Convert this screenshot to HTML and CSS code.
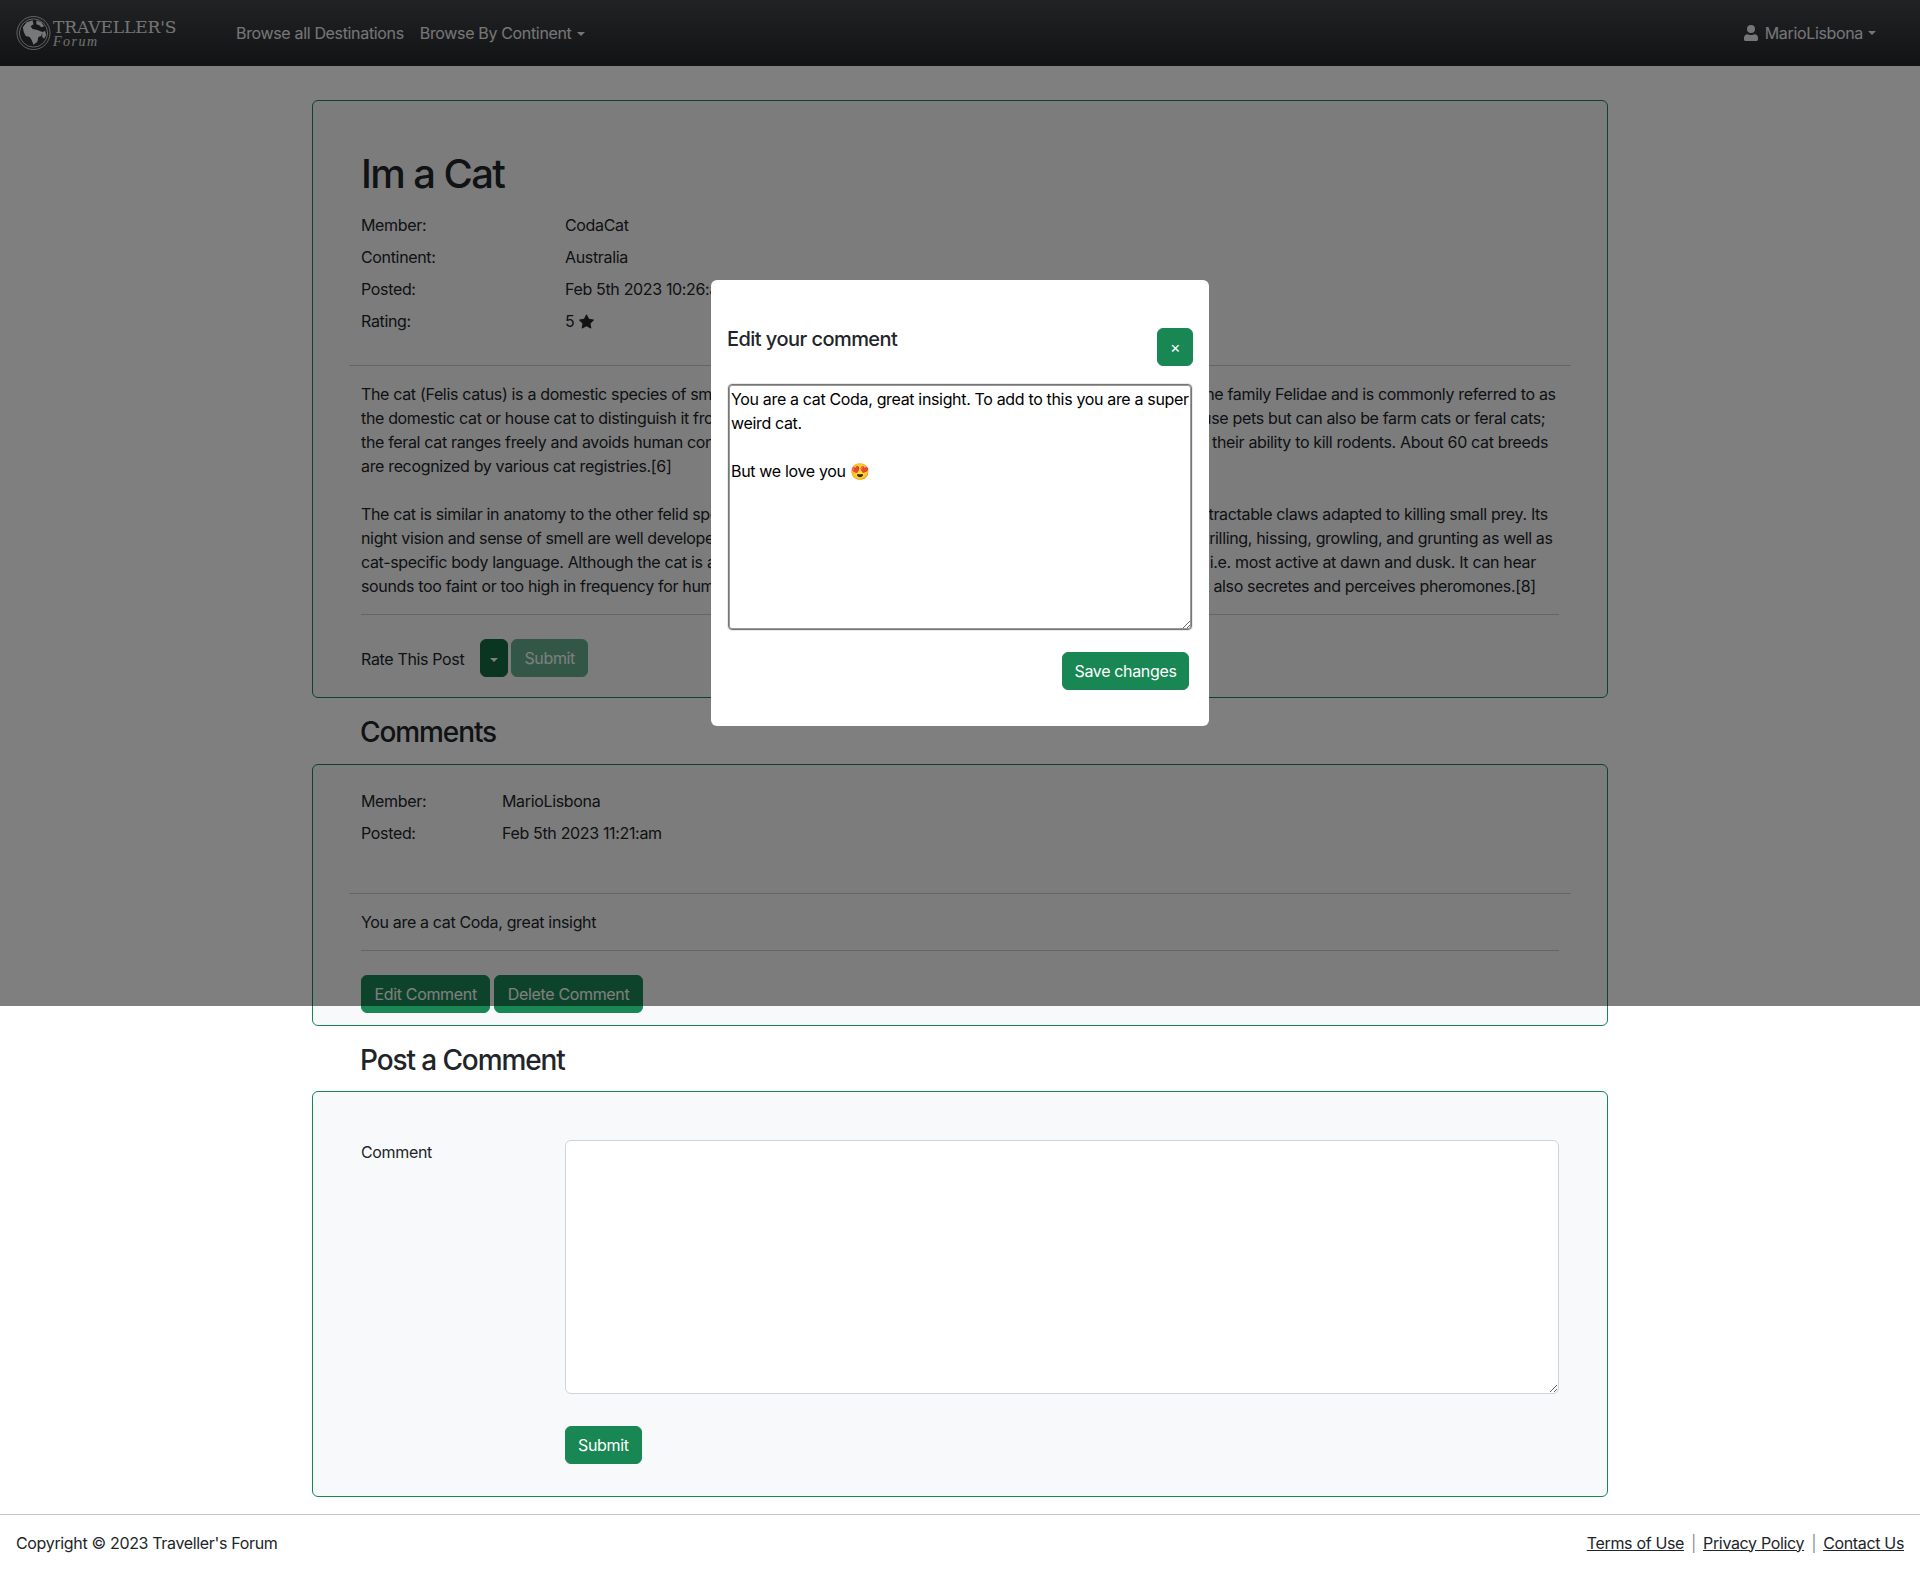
FILE: index.html
```html
<!DOCTYPE html>
<html lang="en">
  <head>
    <meta charset="UTF-8" />
    <title>Traveller's Forum</title>
    <link rel="stylesheet" href="styles.css">
  </head>
  <body>
    <nav class="navbar">
      <a class="brand">
        <svg class="globe" width="35" height="36" viewBox="0 0 36 36">
          <circle cx="18" cy="18" r="17" fill="none" stroke="#f0f0f0" stroke-width="0.8"/>
          <circle cx="18" cy="18" r="14.500" fill="#2e3033" stroke="#f0f0f0" stroke-width="0.8"/>
          <path d="M7 12l4-5 6-2 1 4-3 2 2 3 5 1 5 2-1 4-3 1-1 5-4 3-2-5-2-3-4-1-2-4zM21 5l5 2 3 4-3 1-2-2-3-1zM27 17l3-1 1 4-2 4-2-2z" fill="#f0f0f0"/>
        </svg>
        <span class="brand-text">
          <span class="brand-name">TRAVELLER'S</span>
          <span class="brand-sub">Forum</span>
        </span>
      </a>
      <a class="nav-link">Browse all Destinations</a>
      <a class="nav-link caret">Browse By Continent</a>
      <a class="nav-link caret user">
        <svg width="14" height="16" viewBox="0 0 14 16" fill="#ececec">
          <path d="M7 8a4 4 0 1 0 0-8 4 4 0 0 0 0 8zM3.500 9.200C1.500 9.200 0 10.800 0 12.800V14.500C0 15.300.7 16 1.500 16h11c.8 0 1.500-.7 1.500-1.500v-1.700c0-2-1.500-3.600-3.500-3.600-1 0-1.700.8-3.500.8s-2.500-.8-3.500-.8z"/>
        </svg>
        MarioLisbona
      </a>
    </nav>

    <main class="container">
      <section class="card post-card">
        <h1>Im a Cat</h1>
        <dl class="meta post-meta">
          <dt>Member:</dt><dd>CodaCat</dd>
          <dt>Continent:</dt><dd>Australia</dd>
          <dt>Posted:</dt><dd>Feb 5th 2023 10:26:am</dd>
          <dt>Rating:</dt>
          <dd class="rating">5
            <svg width="15" height="15" viewBox="0 0 16 16" fill="#212529">
              <path d="M3.612 15.443c-.386.198-.824-.149-.746-.592l.83-4.73L.173 6.765c-.329-.314-.158-.888.283-.95l4.898-.696L7.538.792c.197-.39.73-.39.927 0l2.184 4.327 4.898.696c.441.062.612.636.282.95l-3.522 3.356.83 4.73c.078.443-.36.79-.746.592L8 13.187l-4.389 2.256z"/>
            </svg>
          </dd>
        </dl>
        <hr class="wide">
        <p class="body-text">The cat (Felis catus) is a domestic species of small carnivorous mammal.[1][2] It is the only domesticated species in the family Felidae and is commonly referred to as the domestic cat or house cat to distinguish it from the wild members of the family.[4] Cats are commonly kept as house pets but can also be farm cats or feral cats; the feral cat ranges freely and avoids human contact.[5] Domestic cats are valued by humans for companionship and their ability to kill rodents. About 60 cat breeds are recognized by various cat registries.[6]</p>
        <p class="body-text">The cat is similar in anatomy to the other felid species: it has a strong flexible body, quick reflexes, sharp teeth, and retractable claws adapted to killing small prey. Its night vision and sense of smell are well developed. Cat communication includes vocalizations like meowing, purring, trilling, hissing, growling, and grunting as well as cat-specific body language. Although the cat is a social species, but it is a solitary hunter and a crepuscular predator, i.e. most active at dawn and dusk. It can hear sounds too faint or too high in frequency for human ears, such as those made by mice and other small mammals.[7] It also secretes and perceives pheromones.[8]</p>
        <hr class="inner">
        <div class="rate-row">
          <span class="rate-label">Rate This Post</span>
          <button class="btn btn-dark caret-only"></button>
          <button class="btn btn-faded">Submit</button>
        </div>
      </section>

      <h2>Comments</h2>
      <section class="card comment-card">
        <dl class="meta comment-meta">
          <dt>Member:</dt><dd>MarioLisbona</dd>
          <dt>Posted:</dt><dd>Feb 5th 2023 11:21:am</dd>
        </dl>
        <hr class="wide">
        <p class="comment-text">You are a cat Coda, great insight</p>
        <hr class="inner">
        <div class="comment-actions">
          <button class="btn">Edit Comment</button>
          <button class="btn">Delete Comment</button>
        </div>
      </section>

      <h2 class="post-heading">Post a Comment</h2>
      <section class="card form-card">
        <form class="comment-form">
          <label for="comment">Comment</label>
          <textarea id="comment" class="form-box"></textarea>
          <button type="button" class="btn submit-btn">Submit</button>
        </form>
      </section>
    </main>

    <footer class="footer">
      <span>Copyright © 2023 Traveller's Forum</span>
      <span class="footer-links"><a>Terms of Use</a><i>|</i><a>Privacy Policy</a><i>|</i><a>Contact Us</a></span>
    </footer>

    <div class="backdrop"></div>

    <div class="modal">
      <div class="modal-head">
        <h3>Edit your comment</h3>
        <button class="btn close-btn">×</button>
      </div>
      <textarea class="modal-box">You are a cat Coda, great insight. To add to this you are a super weird cat.

But we love you 😍</textarea>
      <div class="modal-foot">
        <button class="btn">Save changes</button>
      </div>
    </div>
  </body>
</html>
```

FILE: styles.css
```css
* {
  box-sizing: border-box;
}

body {
  margin: 0;
  font-family: Inter, "Liberation Sans", sans-serif;
  font-size: 16px;
  line-height: 24px;
  letter-spacing: -0.34px;
  color: #212529;
  background-color: #fff;
}

.navbar {
  height: 66px;
  display: flex;
  align-items: center;
  padding: 0 16px;
  background: linear-gradient(#424548, #24262a);
}

.brand {
  width: 220px;
  display: flex;
  align-items: center;
  gap: 2px;
}

.brand-text {
  display: flex;
  flex-direction: column;
}

.brand-name {
  font-family: "DejaVu Serif", serif;
  font-size: 17px;
  line-height: 18px;
  letter-spacing: -0.1px;
  color: #e8e8e8;
}

.brand-sub {
  font-family: "Liberation Serif", serif;
  font-style: italic;
  font-size: 14px;
  line-height: 12px;
  letter-spacing: 1.5px;
  color: #e0e0e0;
}

.nav-link {
  color: #ececec;
  margin-right: 16px;
}

.caret::after,
.caret-only::after {
  content: "";
  display: inline-block;
  margin-left: 5px;
  vertical-align: 3px;
  border-top: 4px solid;
  border-left: 4px solid transparent;
  border-right: 4px solid transparent;
}

.user {
  margin-left: auto;
  margin-right: 28px;
  display: flex;
  align-items: center;
  gap: 7px;
}

.user::after {
  margin-left: -2px;
  vertical-align: 0;
}

.container {
  width: 1296px;
  margin: 0 auto;
  padding-top: 34px;
}

.card {
  border: 1px solid #198754;
  border-radius: 6px;
  background-color: #f8f9fa;
}

.post-card {
  height: 598px;
  padding: 49px 48px 0;
}

h1 {
  margin: 0 0 15px;
  font-size: 40px;
  line-height: 48px;
  font-weight: 500;
  letter-spacing: -1.6px;
}

.meta {
  display: grid;
  margin: 0;
  row-gap: 8px;
}

.meta dd {
  margin: 0;
}

.post-meta {
  grid-template-columns: 204px 1fr;
}

.comment-meta {
  grid-template-columns: 141px 1fr;
}

.rating {
  display: flex;
  align-items: center;
  gap: 5px;
}

hr {
  border: 0;
  border-top: 1px solid #c9cbcd;
  margin: 0;
}

hr.wide {
  margin: 32px -12px 16px;
}

hr.inner {
  margin: 16px 0 24px;
}

.post-card .body-text {
  margin: 0 0 24px;
}

.post-card .body-text:last-of-type {
  margin-bottom: 0;
}

.rate-row {
  display: flex;
  align-items: center;
}

.rate-label {
  margin: 2px 16px 0 0;
}

.btn {
  height: 38px;
  padding: 0 12px;
  font-family: inherit;
  font-size: 16px;
  letter-spacing: inherit;
  color: #fff;
  background-color: #198754;
  border: 1px solid #198754;
  border-radius: 6px;
}

.btn-dark {
  background-color: #146c43;
  border-color: #146c43;
}

.caret-only {
  width: 28px;
  padding: 0;
  margin-right: 3px;
}

.caret-only::after {
  margin-left: 0;
  vertical-align: 2px;
}

.btn-faded {
  opacity: 0.65;
}

h2 {
  margin: 17px 0 15px 48px;
  font-size: 28px;
  line-height: 34px;
  font-weight: 500;
  letter-spacing: -1.1px;
}

.comment-card {
  height: 262px;
  padding: 24px 48px 0;
}

.comment-meta + hr.wide {
  margin-top: 48px;
}

.comment-text {
  margin: 0;
}

.comment-actions {
  display: flex;
  gap: 4px;
}

.comment-actions .btn {
  padding: 0 12.500px;
}

.post-heading {
  margin-bottom: 14px;
}

.form-card {
  height: 406px;
  padding: 48px 48px 0;
}

.comment-form {
  display: grid;
  grid-template-columns: 204px 1fr;
  row-gap: 32px;
}

.form-box {
  height: 254px;
  border: 1px solid #ced4da;
  border-radius: 6px;
  background-color: #fff;
}

.submit-btn {
  grid-column: 2;
  justify-self: start;
}

.footer {
  margin-top: 17px;
  height: 60px;
  padding: 0 16px 4px;
  display: flex;
  justify-content: space-between;
  align-items: center;
  border-top: 1px solid #c4c4c4;
}

.footer a {
  text-decoration: underline;
}

.footer-links i {
  font-style: normal;
  margin: 0 7px;
  color: #8a919a;
}

.backdrop {
  position: absolute;
  top: 0;
  left: 0;
  width: 1920px;
  height: 1006px;
  background-color: #000;
  opacity: 0.5;
}

.modal {
  position: absolute;
  top: 280px;
  left: 711px;
  width: 498px;
  height: 446px;
  padding: 0 16px;
  background-color: #fff;
  border-radius: 6px;
}

.modal-head {
  display: flex;
  justify-content: space-between;
  align-items: flex-start;
  padding-top: 48px;
  height: 104px;
}

.modal-head h3 {
  margin: -1px 0 0;
  font-size: 20px;
  line-height: 24px;
  font-weight: 500;
  letter-spacing: -0.55px;
}

.close-btn {
  width: 36px;
  padding: 0;
}

.modal-box {
  display: block;
  width: 464px;
  height: 246px;
  margin: 0 1px;
  padding: 2px;
  font-family: inherit;
  font-size: 16px;
  line-height: 24px;
  letter-spacing: inherit;
  color: #000;
  border: 1px solid #767676;
  border-radius: 4px;
  outline: 0;
  box-shadow: 0 0 0 1px #e9e9e9, inset 0 0 0 1px #9a9a9a;
}

.modal-foot {
  display: flex;
  justify-content: flex-end;
  padding-right: 4px;
  margin-top: 22px;
}

.modal-foot .btn {
  width: 127px;
  padding: 0;
}
```
